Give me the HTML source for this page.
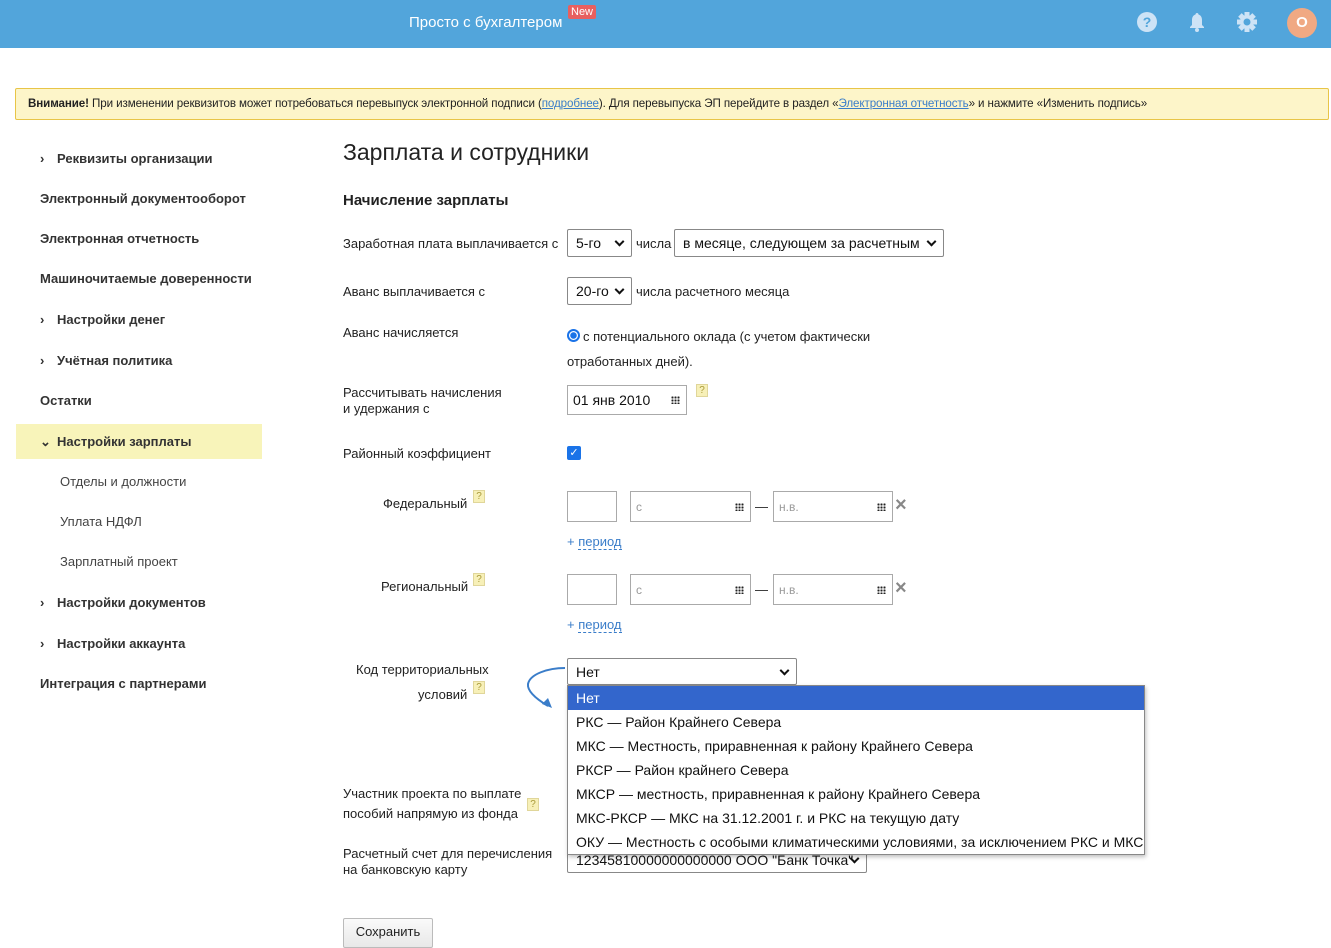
<!DOCTYPE html>
<html><head><meta charset="utf-8"><style>
*{box-sizing:border-box;margin:0;padding:0}
body{width:1331px;height:944px;overflow:hidden;background:#fff;font-family:"Liberation Sans",Arial,sans-serif;color:#222;position:relative}
.a{position:absolute;white-space:nowrap}
.hdr{position:absolute;left:0;top:0;width:1331px;height:48px;background:#52a5db}
.nav{font-size:13px;font-weight:bold;color:#333}
.nav i{display:inline-block;width:17px;font-style:normal}
.lbl{font-size:13px;color:#222}
.sel{position:absolute;border:1px solid #888;border-radius:2px;background:#fff;font-size:14px;color:#111;padding-left:8px;display:flex;align-items:center}
.sel:after{content:"";position:absolute;right:8px;top:50%;width:5px;height:5px;border-right:2px solid #111;border-bottom:2px solid #111;transform:translateY(-70%) rotate(45deg)}
.inp{position:absolute;border:1px solid #aaa;background:#fff;font-size:12px;color:#999;padding-left:5px;display:flex;align-items:center}
.q{position:absolute;width:12px;height:13px;background:#f7f0b8;border:1px solid #e0d69a;font-size:10px;color:#a99a3a;text-align:center;line-height:11px}
.cal{position:absolute;right:6px;top:50%;margin-top:-4px;width:9px;height:8px;background:radial-gradient(circle,#222 1px,transparent 1.2px) 0 0/3px 3px}
.per{font-size:13px;color:#3a7dc9}
.per span{border-bottom:1px dashed #3a7dc9}
.x{font-size:20px;color:#888;font-weight:bold}
.dd{position:absolute;left:567px;top:685px;width:578px;height:170px;background:#fff;border:1px solid #888;box-shadow:1px 2px 4px rgba(0,0,0,.25);font-size:14px;color:#111}
.dd div{height:24px;line-height:24px;padding-left:8px;white-space:nowrap}
</style></head><body>
<div class="hdr"></div>
<div class="a" style="left:409px;top:14px;font-size:15px;color:#fff">Просто с бухгалтером</div>
<div class="a" style="left:568px;top:5px;background:#e8605f;color:#fff;font-size:11px;padding:1px 3px;border-radius:2px">New</div>
<svg class="a" style="left:1137px;top:12px" width="20" height="20"><circle cx="10" cy="10" r="10" fill="#cde3f6"/><text x="10" y="15" font-size="14" font-weight="bold" fill="#52a5db" text-anchor="middle" font-family="Liberation Sans">?</text></svg>
<svg class="a" style="left:1187px;top:11px" width="20" height="22"><path d="M10 2c-1 0-1.5.8-1.5 1.5C6 4.3 5 6.5 5 9v5l-2 2v1h14v-1l-2-2V9c0-2.5-1-4.7-3.5-5.5C11.5 2.8 11 2 10 2z" fill="#cde3f6"/><circle cx="10" cy="19" r="2" fill="#cde3f6"/></svg>
<svg class="a" style="left:1236px;top:11px" width="22" height="22"><g fill="#cde3f6" transform="translate(11 11)"><circle r="7"/><rect x="-2.5" y="-10" width="5" height="20"/><rect x="-2.5" y="-10" width="5" height="20" transform="rotate(45)"/><rect x="-2.5" y="-10" width="5" height="20" transform="rotate(90)"/><rect x="-2.5" y="-10" width="5" height="20" transform="rotate(135)"/></g><circle cx="11" cy="11" r="3.5" fill="#52a5db"/></svg>
<div class="a" style="left:1287px;top:8px;width:30px;height:30px;border-radius:50%;background:#f0a983;color:#fff;font-weight:bold;font-size:15px;text-align:center;line-height:30px">О</div>

<div class="a" style="left:15px;top:88px;width:1314px;height:32px;background:#fdf5c9;border:1px solid #e8c547;border-radius:2px;font-size:11.6px;letter-spacing:-0.1px;color:#222;padding:8px 0 0 12px"><b>Внимание!</b> При изменении реквизитов может потребоваться перевыпуск электронной подписи (<u style="color:#3a7dc9">подробнее</u>). Для перевыпуска ЭП перейдите в раздел «<u style="color:#3a7dc9">Электронная отчетность</u>» и нажмите «Изменить подпись»</div>

<div class="a nav" style="left:40px;top:151px"><i>›</i>Реквизиты организации</div>
<div class="a nav" style="left:40px;top:191px">Электронный документооборот</div>
<div class="a nav" style="left:40px;top:231px">Электронная отчетность</div>
<div class="a nav" style="left:40px;top:271px">Машиночитаемые доверенности</div>
<div class="a nav" style="left:40px;top:312px"><i>›</i>Настройки денег</div>
<div class="a nav" style="left:40px;top:353px"><i>›</i>Учётная политика</div>
<div class="a nav" style="left:40px;top:393px">Остатки</div>
<div class="a" style="left:16px;top:424px;width:246px;height:35px;background:#f8f4ba"></div>
<div class="a nav" style="left:40px;top:434px"><i>⌄</i>Настройки зарплаты</div>
<div class="a lbl" style="left:60px;top:474px;color:#444">Отделы и должности</div>
<div class="a lbl" style="left:60px;top:514px;color:#444">Уплата НДФЛ</div>
<div class="a lbl" style="left:60px;top:554px;color:#444">Зарплатный проект</div>
<div class="a nav" style="left:40px;top:595px"><i>›</i>Настройки документов</div>
<div class="a nav" style="left:40px;top:636px"><i>›</i>Настройки аккаунта</div>
<div class="a nav" style="left:40px;top:676px">Интеграция с партнерами</div>

<div class="a" style="left:343px;top:139px;font-size:23px;color:#222">Зарплата и сотрудники</div>
<div class="a" style="left:343px;top:192px;font-size:15px;font-weight:bold;color:#222">Начисление зарплаты</div>

<div class="a lbl" style="left:343px;top:236px">Заработная плата выплачивается с</div>
<div class="sel" style="left:567px;top:229px;width:65px;height:28px">5-го</div>
<div class="a lbl" style="left:636px;top:236px">числа</div>
<div class="sel" style="left:674px;top:229px;width:270px;height:28px">в месяце, следующем за расчетным</div>

<div class="a lbl" style="left:343px;top:284px">Аванс выплачивается с</div>
<div class="sel" style="left:567px;top:277px;width:65px;height:28px">20-го</div>
<div class="a lbl" style="left:636px;top:284px">числа расчетного месяца</div>

<div class="a lbl" style="left:343px;top:325px">Аванс начисляется</div>
<div class="a" style="left:567px;top:329px;width:13px;height:13px;border-radius:50%;border:2px solid #1a73e8;background:radial-gradient(circle,#1a73e8 3px,#fff 3.5px)"></div>
<div class="a lbl" style="left:583px;top:329px">с потенциального оклада (с учетом фактически</div>
<div class="a lbl" style="left:567px;top:354px">отработанных дней).</div>

<div class="a lbl" style="left:343px;top:385px;line-height:16px">Рассчитывать начисления<br>и удержания с</div>
<div class="inp" style="left:567px;top:385px;width:120px;height:30px;font-size:14px;color:#111">01 янв 2010<i class="cal"></i></div>
<div class="q" style="left:696px;top:384px">?</div>

<div class="a lbl" style="left:343px;top:446px">Районный коэффициент</div>
<div class="a" style="left:567px;top:446px;width:14px;height:14px;background:#1a73e8;border-radius:2px;color:#fff;font-size:11px;text-align:center;line-height:14px">✓</div>

<div class="a lbl" style="left:383px;top:496px">Федеральный</div>
<div class="q" style="left:473px;top:490px">?</div>
<div class="inp" style="left:567px;top:491px;width:50px;height:31px"></div>
<div class="inp" style="left:630px;top:491px;width:121px;height:31px">с<i class="cal"></i></div>
<div class="a" style="left:755px;top:499px;font-size:13px">—</div>
<div class="inp" style="left:773px;top:491px;width:120px;height:31px">н.в.<i class="cal"></i></div>
<div class="a x" style="left:895px;top:494px">×</div>
<div class="a per" style="left:567px;top:534px">+ <span>период</span></div>

<div class="a lbl" style="left:381px;top:579px">Региональный</div>
<div class="q" style="left:473px;top:573px">?</div>
<div class="inp" style="left:567px;top:574px;width:50px;height:31px"></div>
<div class="inp" style="left:630px;top:574px;width:121px;height:31px">с<i class="cal"></i></div>
<div class="a" style="left:755px;top:582px;font-size:13px">—</div>
<div class="inp" style="left:773px;top:574px;width:120px;height:31px">н.в.<i class="cal"></i></div>
<div class="a x" style="left:895px;top:577px">×</div>
<div class="a per" style="left:567px;top:617px">+ <span>период</span></div>

<div class="a lbl" style="left:356px;top:662px">Код территориальных</div>
<div class="a lbl" style="left:418px;top:687px">условий</div>
<div class="q" style="left:473px;top:681px">?</div>
<svg class="a" style="left:520px;top:664px" width="50" height="46"><path d="M45 4C28 4 10 10 8 20c-1 8 10 16 20 22" fill="none" stroke="#3a7dc9" stroke-width="2"/><path d="M22 40l10 4-4-10z" fill="#3a7dc9"/></svg>
<div class="sel" style="left:567px;top:658px;width:230px;height:27px">Нет</div>

<div class="a lbl" style="left:343px;top:784px;line-height:20px">Участник проекта по выплате<br>пособий напрямую из фонда</div>
<div class="q" style="left:527px;top:798px">?</div>

<div class="a lbl" style="left:343px;top:846px;line-height:16px">Расчетный счет для перечисления<br>на банковскую карту</div>
<div class="sel" style="left:567px;top:846px;width:300px;height:27px;overflow:hidden">12345810000000000000 ООО "Банк Точка"</div>

<div class="dd">
<div style="background:#3366cc;color:#fff">Нет</div>
<div>РКС — Район Крайнего Севера</div>
<div>МКС — Местность, приравненная к району Крайнего Севера</div>
<div>РКСР — Район крайнего Севера</div>
<div>МКСР — местность, приравненная к району Крайнего Севера</div>
<div>МКС-РКСР — МКС на 31.12.2001 г. и РКС на текущую дату</div>
<div>ОКУ — Местность с особыми климатическими условиями, за исключением РКС и МКС</div>
</div>

<div class="a" style="left:343px;top:918px;width:90px;height:30px;border:1px solid #bbb;background:linear-gradient(#fafafa,#e8e8e8);font-size:13px;text-align:center;line-height:26px;border-radius:2px">Сохранить</div>
</body></html>
